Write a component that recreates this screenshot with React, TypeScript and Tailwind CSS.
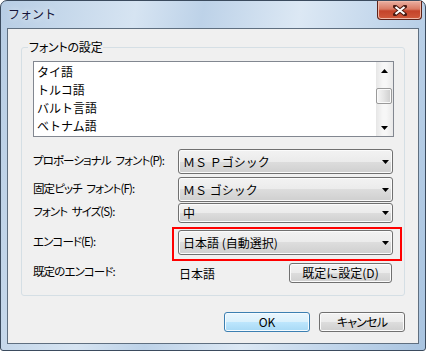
const items = ["タイ語", "トルコ語", "バルト言語", "ベトナム語"];

function Arrow() {
  return (
    <svg width="7" height="4" viewBox="0 0 7 4">
      <path d="M0 0h7L3.5 4z" fill="#000" />
    </svg>
  );
}

function Combo({ text, className }: { text: string; className: string }) {
  return (
    <div
      className={`mr-[1px] flex flex-1 items-center justify-between rounded-[3px] border border-[#707070] bg-[linear-gradient(#f2f2f2_0%,#ebebeb_50%,#dddddd_50%,#cfcfcf_100%)] pl-[4px] pr-[3px] shadow-[inset_0_0_0_1px_#fbfbfb] ${className}`}
    >
      <span className="leading-[14px]">{text}</span>
      <Arrow />
    </div>
  );
}

function Scrollbar() {
  return (
    <div className="flex w-[17px] flex-col bg-[linear-gradient(90deg,#e6e6e6,#f7f7f7_40%,#f7f7f7_60%,#e9e9e9)]">
      <div className="flex h-[17px] items-center justify-center">
        <svg width="7" height="4" viewBox="0 0 7 4">
          <path d="M0 4h7L3.5 0z" fill="#000" />
        </svg>
      </div>
      <div className="flex-1 pt-[9px]">
        <div className="h-[16px] w-[16px] rounded-[2px] border border-[#9a9a9a] bg-[linear-gradient(90deg,#f6f6f6,#e4e4e4_50%,#cdcdcd)] shadow-[inset_0_0_0_1px_#fafafa]" />
      </div>
      <div className="flex h-[17px] items-center justify-center">
        <Arrow />
      </div>
    </div>
  );
}

function Button({ children, primary, className }: { children: React.ReactNode; primary?: boolean; className: string }) {
  return (
    <button
      type="button"
      className={
        primary
          ? `flex items-center justify-center rounded-[3px] border border-[#3c7fb1] bg-[linear-gradient(#eaf6fd_0%,#d9f0fc_50%,#bee6fd_50%,#a7d9f5_100%)] leading-[14px] shadow-[inset_0_0_0_1px_#f4fbff] ${className}`
          : `flex items-center justify-center rounded-[3px] border border-[#707070] bg-[linear-gradient(#f2f2f2_0%,#ebebeb_50%,#dddddd_50%,#cfcfcf_100%)] leading-[14px] shadow-[inset_0_0_0_1px_#fbfbfb] ${className}`
      }
    >
      {children}
    </button>
  );
}

// dialog label text: proportional kana, narrower than Noto's default
const label =
  "w-[145px] whitespace-nowrap text-[11.5px] tracking-[-0.9px] [word-spacing:3px] [font-feature-settings:'palt'] -mt-[2px]";

export default function App() {
  return (
    <div className="flex h-[351px] w-[426px] flex-col rounded-t-[7px] rounded-b-[3px] border border-[#3b4b5e] bg-[linear-gradient(100deg,#b7cde4_0%,#d6e4f2_28%,#bdd2e8_42%,#dce8f4_62%,#c2d6eb_80%,#a9c4e0_100%)] px-[6px] pb-[6px] font-['Noto_Sans_CJK_JP',sans-serif] text-[12px] text-black">
      {/* title bar */}
      <div className="flex h-[27px] items-start justify-between">
        <span className="ml-[1px] mt-[5px] leading-[16px] text-[#15153a] [text-shadow:0_0_6px_#fff]">フォント</span>
        <div className="-mr-[3px] flex h-[19px] w-[45px] items-center justify-center rounded-b-[4px] border border-t-0 border-[#5c2219] bg-[linear-gradient(#eab0a2_0%,#d97a64_45%,#c4432a_55%,#d05a3c_100%)] shadow-[inset_0_0_0_1px_#f0b8a8]">
          <svg width="14" height="11" viewBox="0 0 14 11">
            <path d="M2 1.5l10 8M12 1.5l-10 8" stroke="#4a1a12" strokeWidth="4" strokeLinecap="round" />
            <path d="M2.5 2l9 7M11.5 2l-9 7" stroke="#fff" strokeWidth="2.2" />
          </svg>
        </div>
      </div>

      {/* client area */}
      <div className="flex flex-1 flex-col border border-[#5f6f80] bg-[#f0f0f0] px-[13px] pt-[11px]">
        <fieldset className="rounded-[3px] border border-[#d5dfe5] px-[6px] pb-[12px] pt-[7px]">
          <legend className="px-[1px] leading-[14px] tracking-[-0.2px] [font-feature-settings:'palt']">フォントの設定</legend>
          <div className="pl-[5px] pr-[4px]">
            <div className="flex h-[76px] border border-[#828790] bg-white">
              <div className="flex-1 pl-[3px] pt-[1px] leading-[18px]">
                {items.map((it) => (
                  <div key={it}>{it}</div>
                ))}
              </div>
              <Scrollbar />
            </div>

            <div className="mt-[12px] flex h-[25px] items-center">
              <span className={label}>プロポーショナル フォント(P):</span>
              <Combo text="ＭＳ Ｐゴシック" className="h-[25px]" />
            </div>
            <div className="mt-[3px] flex h-[25px] items-center">
              <span className={label}>固定ピッチ フォント(F):</span>
              <Combo text="ＭＳ ゴシック" className="h-[25px]" />
            </div>
            <div className="mt-[1px] flex h-[20px] items-center">
              <span className={label}>フォント サイズ(S):</span>
              <Combo text="中" className="h-[20px]" />
            </div>
            <div className="relative mt-[7px] flex h-[25px] items-center">
              <span className={label}>エンコード(E):</span>
              <Combo text="日本語 (自動選択)" className="h-[25px]" />
              <div className="pointer-events-none absolute -bottom-[6px] -right-[8px] -top-[3px] left-[139px] border-2 border-[#ff0000]" />
            </div>
            <div className="mt-[8px] flex h-[20px] items-center">
              <span className={label}>既定のエンコード:</span>
              <span className="ml-[1px] mt-[2px] flex-1">日本語</span>
              <Button className="mr-[2px] h-[20px] w-[103px]">既定に設定(D)</Button>
            </div>
          </div>
        </fieldset>

        <div className="mt-[16px] flex justify-end gap-[9px]">
          <Button primary className="h-[20px] w-[86px]">OK</Button>
          <Button className="h-[20px] w-[86px] tracking-[-0.8px] [font-feature-settings:'palt']">キャンセル</Button>
        </div>
      </div>
    </div>
  );
}
